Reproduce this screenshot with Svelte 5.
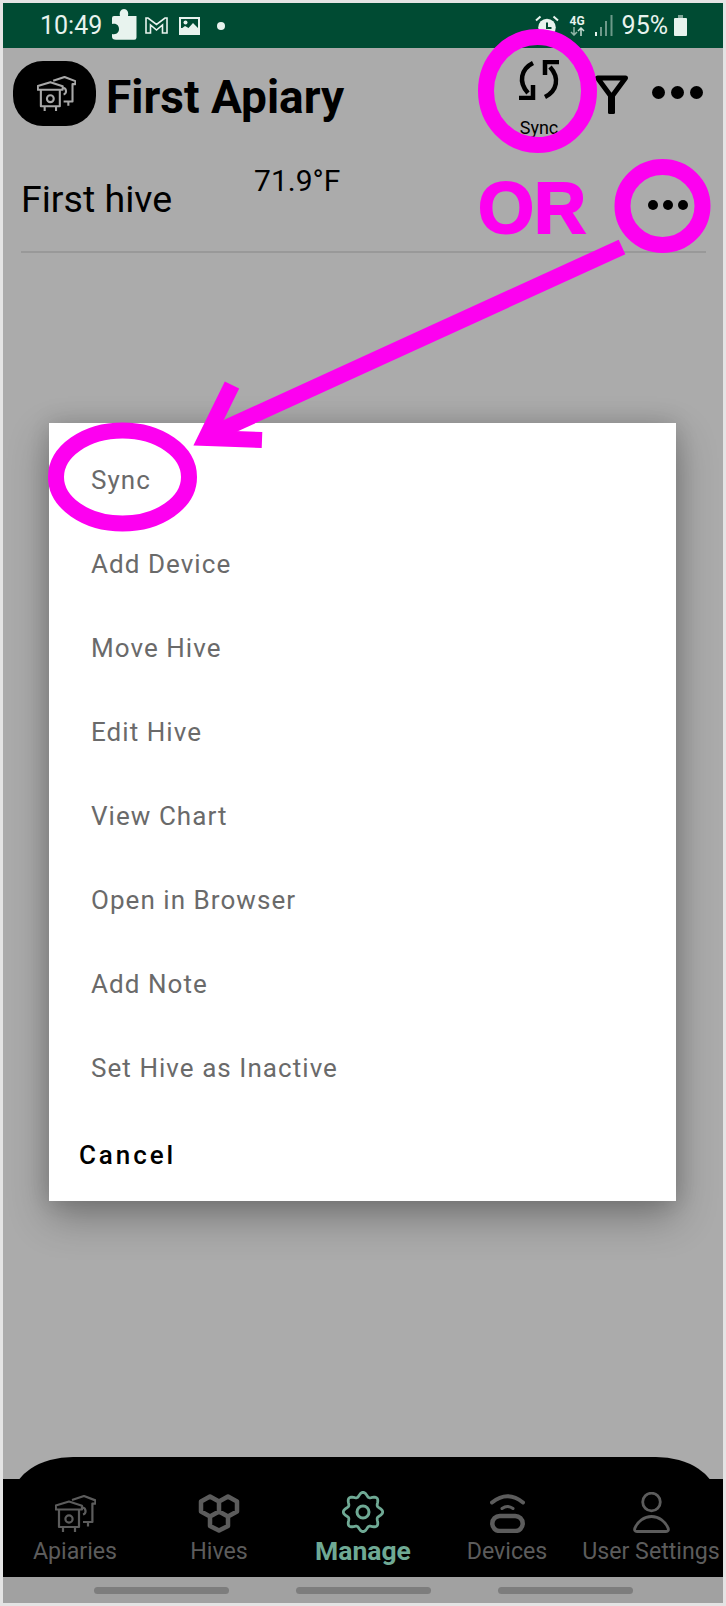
<script>
	const menuItems = [
		'Sync',
		'Add Device',
		'Move Hive',
		'Edit Hive',
		'View Chart',
		'Open in Browser',
		'Add Note',
		'Set Hive as Inactive'
	];

	// scalloped outline for the Manage cog
	const gearPoints = [];
	for (let i = 0; i < 120; i++) {
		const a = (i / 120) * Math.PI * 2;
		const r = 17.6 + 2.1 * Math.cos(8 * a);
		gearPoints.push(`${(21 + r * Math.sin(a)).toFixed(2)},${(21 - r * Math.cos(a)).toFixed(2)}`);
	}
	const gear = gearPoints.join(' ');
</script>

{#snippet hive()}
	<path d="M.8 10.500 14 6.500l13 4.200v3.800H.8zM4 14.500V32h20V14.500M8 32v5M20 32v5" />
	<circle cx="14" cy="24" r="3.600" />
	<path d="M17 5 29 1l11.400 4.400v3.200h-3V27H28M33 27v4.500M27.500 12.500a3.600 3.600 0 0 1 .5 7" />
{/snippet}

<div class="frame">
	<div class="screen">
		<div class="status">
			<span class="clock">10:49</span>
			<svg class="ic-puzzle" viewBox="0 0 25 31" width="25" height="31">
				<path d="M2 7h6C7 3 9 0 12 0s5 3 4 7h8.500v21.500q0 2.200-2.200 2.200H4q-4 0-4-3V25c5 1 7-2 7-5s-2-6-7-5V9q0-2 2-2z" />
			</svg>
			<svg class="ic-gmail" viewBox="0 0 23 17" width="23" height="17">
				<path d="M1 1h2l8.500 6.500L20 1h2v15h-4.500V8l-6 5-6-5v8H1z" />
			</svg>
			<svg class="ic-image" viewBox="0 0 21 18" width="21" height="18">
				<rect width="21" height="18" fill="#e8f3ee" />
				<rect x="2" y="2" width="17" height="9" fill="#004b33" />
				<circle cx="6.500" cy="5.500" r="2" fill="#e8f3ee" />
				<path d="M2 12l4-3 3.500 2 4.500-5 5 5v2H2z" fill="#e8f3ee" />
			</svg>
			<span class="dot"></span>
			<div class="status-right">
				<svg viewBox="0 0 24 22" width="24" height="22">
					<circle cx="12" cy="12.500" r="8.800" fill="#e8f3ee" />
					<path d="M12 7.500v5.500h4.500" fill="none" stroke="#004b33" stroke-width="2" />
					<path d="M1 5.500 5.500 1.500M23 5.500 18.500 1.500" stroke="#e8f3ee" stroke-width="2" />
				</svg>
				<div class="net">
					<span>4G</span>
					<svg viewBox="0 0 15 9" width="15" height="9">
						<path d="M4 0v8M1 5l3 3 3-3" fill="none" stroke="#8fb5a6" stroke-width="1.500" />
						<path d="M11 9V1M8 4l3-3 3 3" fill="none" stroke="#c9ded5" stroke-width="1.500" />
					</svg>
				</div>
				<svg class="signal" viewBox="0 0 18 21" width="18" height="21">
					<rect x="0" y="17" width="2" height="4" fill="#e8f3ee" />
					<rect x="5" y="12" width="2" height="9" fill="#6d9a8a" />
					<rect x="10" y="6" width="2" height="15" fill="#6d9a8a" />
					<rect x="15.500" y="0" width="2" height="21" fill="#6d9a8a" />
				</svg>
				<span class="clock">95%</span>
				<svg class="battery" viewBox="0 0 13 21" width="13" height="21">
					<rect x="4" y="0" width="5" height="3" fill="#7fa597" />
					<rect x="0" y="3" width="13" height="18" rx="1" fill="#e8f3ee" />
				</svg>
			</div>
		</div>

		<header class="header">
			<div class="logo">
				<svg class="hive" viewBox="0 0 41 38" width="39" height="36">{@render hive()}</svg>
			</div>
			<h1>First Apiary</h1>
			<div class="sync">
				<svg viewBox="0 0 42 40" width="42" height="40">
					<path d="M15 3C3 9 0 22 10 33M27 37C39 31 42 18 32 7" fill="none" stroke="#000" stroke-width="4.500" />
					<path d="M1 38h14V25M41 2H27v13" fill="none" stroke="#000" stroke-width="4.500" />
				</svg>
				<span>Sync</span>
			</div>
			<svg class="filter" viewBox="0 0 33 39" width="33" height="39">
				<path d="M2.500 3h28L16.500 22z" fill="none" stroke="#000" stroke-width="5" stroke-linejoin="round" />
				<rect x="13" y="19" width="7" height="20" rx="1.500" />
			</svg>
			<div class="dots big"><i></i><i></i><i></i></div>
		</header>

		<section class="row">
			<span class="hive-name">First hive</span>
			<span class="temp">71.9°F</span>
			<div class="dots small"><i></i><i></i><i></i></div>
		</section>

		<div class="spacer"></div>

		<div class="hump"></div>
		<nav class="tabs">
			<div class="tab">
				<div class="tab-icon">
					<svg class="hive" viewBox="0 0 41 38" width="41" height="38">{@render hive()}</svg>
				</div>
				<span>Apiaries</span>
			</div>
			<div class="tab">
				<div class="tab-icon">
					<svg viewBox="0 0 42 39" width="42" height="39" fill="none" stroke="#5c5c5c" stroke-width="4.500" stroke-linejoin="round">
						<path d="M12 2.500l9 5v10l-9 5-9-5v-10zM30 2.500l9 5v10l-9 5-9-5v-10zM21 17.500l9 5v9.500l-9 4.500-9-4.500v-9.500z" />
					</svg>
				</div>
				<span>Hives</span>
			</div>
			<div class="tab active">
				<div class="tab-icon">
					<svg viewBox="0 0 42 42" width="42" height="42" fill="none" stroke="#6fa994" stroke-width="2.800">
						<polygon points={gear} stroke-linejoin="round" />
						<circle cx="21" cy="21" r="6" stroke-width="3" />
					</svg>
				</div>
				<span>Manage</span>
			</div>
			<div class="tab">
				<div class="tab-icon">
					<svg viewBox="0 0 35 40" width="35" height="40" fill="none" stroke="#5c5c5c" stroke-linecap="round">
						<path d="M2 9.500Q17.500-3 33 9.500" stroke-width="4" />
						<path d="M12 15.500Q17.500 11.500 23 15.500" stroke-width="3" />
						<rect x="2.300" y="23" width="30.400" height="15" rx="7.500" stroke-width="4.500" />
					</svg>
				</div>
				<span>Devices</span>
			</div>
			<div class="tab">
				<div class="tab-icon">
					<svg viewBox="0 0 37 41" width="37" height="41" fill="none" stroke="#5c5c5c" stroke-width="2.800">
						<circle cx="18.500" cy="10" r="8.800" />
						<path d="M4 39.500h29c2 0 3-1.500 2-3.500-2.500-6.500-9-11.500-16.500-11.500S4.500 29.500 2 36c-1 2 0 3.500 2 3.500z" />
					</svg>
				</div>
				<span>User Settings</span>
			</div>
		</nav>
		<div class="navbar"><i></i><i></i><i></i></div>

		<div class="dialog">
			<ul>
				{#each menuItems as item}
					<li>{item}</li>
				{/each}
			</ul>
			<div class="cancel">Cancel</div>
		</div>
	</div>

	<!-- hand-drawn callouts on top of the screenshot -->
	<svg class="marks" viewBox="0 0 726 1606" width="726" height="1606" fill="none" stroke="#fd00f0" stroke-width="16">
		<ellipse cx="537.500" cy="91" rx="51.500" ry="54" />
		<ellipse cx="662.500" cy="206" rx="40" ry="39" />
		<ellipse cx="122.500" cy="477" rx="66.500" ry="46.500" />
		<path d="M622 247 208 436" />
		<path d="M232 385 206 438l56 2" />
	</svg>
	<span class="or">OR</span>
</div>

<style>
	:global(body) {
		margin: 0;
	}

	.frame {
		position: relative;
		width: 726px;
		height: 1606px;
		padding: 3px;
		box-sizing: border-box;
		background: #e4e4e4;
		font-family: Roboto, sans-serif;
		overflow: hidden;
	}

	.screen {
		position: relative;
		height: 1600px;
		display: flex;
		flex-direction: column;
		background: #ababab;
		color: #000;
	}

	.status {
		height: 45px;
		flex: none;
		display: flex;
		align-items: center;
		padding: 0 36px 0 37px;
		background: #004b33;
		color: #e8f3ee;
	}

	.clock {
		font-size: 25px;
		line-height: 45px;
	}

	.ic-puzzle {
		margin: -2px 0 0 10px;
		fill: #e8f3ee;
	}

	.ic-gmail {
		margin: 0 0 0 8px;
		fill: none;
		stroke: #e8f3ee;
		stroke-width: 1.6;
	}

	.ic-image {
		margin-left: 11px;
	}

	.dot {
		width: 8px;
		height: 8px;
		margin-left: 17px;
		border-radius: 50%;
		background: #e8f3ee;
	}

	.status-right {
		margin-left: auto;
		display: flex;
		align-items: center;
	}

	.net {
		margin-left: 11px;
		display: flex;
		flex-direction: column;
		align-items: center;
		line-height: 12px;
		font-size: 12px;
		font-weight: 700;
	}

	.signal {
		margin-left: 10px;
	}

	.signal + .clock {
		margin-left: 9px;
	}

	.battery {
		margin-left: 6px;
	}

	.hive {
		fill: none;
		stroke: #5c5c5c;
		stroke-width: 2.2;
		stroke-linejoin: round;
	}

	.header {
		height: 92px;
		flex: none;
		position: relative;
		display: flex;
		align-items: flex-start;
		padding: 13px 20px 0 10px;
		box-sizing: border-box;
	}

	.logo {
		width: 83px;
		height: 65px;
		display: flex;
		align-items: center;
		justify-content: center;
		background: #000;
		border-radius: 30px;
	}

	.logo .hive {
		stroke: #a8a8a8;
		margin-left: 3px;
	}

	h1 {
		margin: 1px 0 0 10px;
		font-size: 46px;
		font-weight: 700;
		line-height: 70px;
	}

	.sync {
		margin: -1px 0 0 auto;
		display: flex;
		flex-direction: column;
		align-items: center;
		font-size: 18px;
		line-height: 24px;
		gap: 16px;
	}

	.filter {
		margin: 14px 0 0 35px;
	}

	.dots {
		display: flex;
	}

	.dots i {
		display: block;
		border-radius: 50%;
		background: #000;
	}

	.dots.big {
		margin: 25px 0 0 24px;
		gap: 6px;
	}

	.dots.big i {
		width: 13px;
		height: 13px;
	}

	.row {
		height: 113px;
		flex: none;
		margin: 0 17px 0 18px;
		display: flex;
		align-items: flex-start;
		border-bottom: 2px solid #999;
		box-sizing: border-box;
	}

	.hive-name {
		margin-top: 37px;
		font-size: 37.500px;
		line-height: 44px;
	}

	.temp {
		margin: 23px 0 0 82px;
		font-size: 30px;
		line-height: 36px;
	}

	.dots.small {
		margin: 60px 18px 0 auto;
		gap: 5px;
	}

	.dots.small i {
		width: 10px;
		height: 10px;
	}

	.spacer {
		flex: 1;
	}

	.hump {
		height: 22px;
		flex: none;
		overflow: hidden;
	}

	.hump::before {
		content: '';
		display: block;
		height: 60px;
		margin: 0 7px 0 10px;
		background: #000;
		border-radius: 60px 60px 0 0 / 40px 40px 0 0;
	}

	.tabs {
		height: 98px;
		flex: none;
		display: grid;
		grid-template-columns: repeat(5, 1fr);
		background: #000;
		color: #5c5c5c;
	}

	.tab {
		display: flex;
		flex-direction: column;
		align-items: center;
		font-size: 23.200px;
		line-height: 30px;
		white-space: nowrap;
	}

	.tab-icon {
		height: 44px;
		margin-top: 10px;
		margin-bottom: 3px;
		display: flex;
		align-items: flex-end;
	}

	.tab.active {
		color: #6fa994;
		font-weight: 700;
		font-size: 26.500px;
	}

	.navbar {
		height: 26px;
		flex: none;
		display: flex;
		justify-content: center;
		gap: 67px;
		padding-top: 10px;
		box-sizing: border-box;
		background: #a1a1a1;
	}

	.navbar i {
		display: block;
		width: 135px;
		height: 7px;
		border-radius: 4px;
		background: #7d7d7d;
	}

	.dialog {
		position: absolute;
		left: 46px;
		top: 420px;
		width: 627px;
		height: 778px;
		background: #fff;
		box-shadow: 0 16px 38px rgba(0, 0, 0, 0.3), 0 0 22px rgba(0, 0, 0, 0.14);
	}

	ul {
		margin: 0;
		padding: 15px 0 0 42px;
		list-style: none;
	}

	li {
		height: 84px;
		line-height: 84px;
		font-size: 26px;
		letter-spacing: 1.050px;
		color: #6a6a6a;
	}

	.cancel {
		height: 91px;
		line-height: 91px;
		padding-left: 30px;
		font-size: 26px;
		font-weight: 500;
		letter-spacing: 2.900px;
		color: #000;
	}

	.marks {
		position: absolute;
		left: 0;
		top: 0;
		pointer-events: none;
	}

	.or {
		position: absolute;
		left: 478px;
		top: 168px;
		font-family: 'Liberation Sans', Arial, sans-serif;
		font-size: 72px;
		line-height: 80px;
		font-weight: 700;
		color: #fd00f0;
		-webkit-text-stroke: 2px #fd00f0;
	}
</style>
